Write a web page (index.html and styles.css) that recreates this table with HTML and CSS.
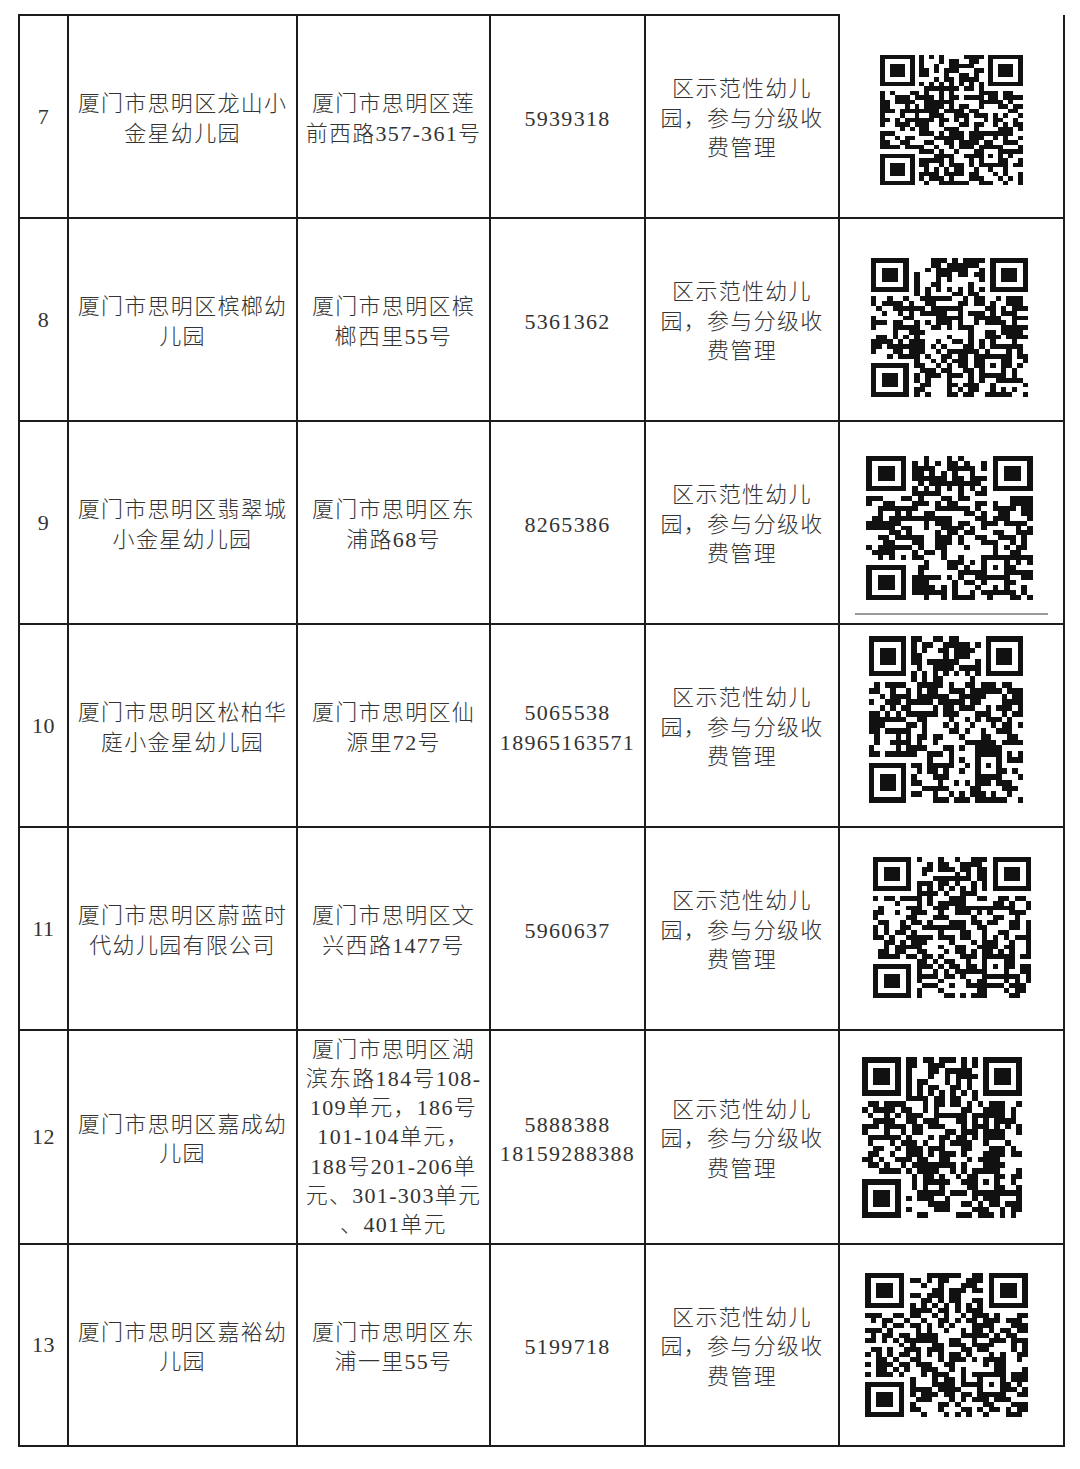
FILE: index.html
```html
<!DOCTYPE html>
<html lang="zh-CN">
<head>
<meta charset="utf-8">
<title>幼儿园名单</title>
<link rel="stylesheet" href="styles.css">
</head>
<body>
<table class="list">
  <colgroup>
    <col class="c-no"><col class="c-name"><col class="c-addr"><col class="c-tel"><col class="c-note"><col class="c-qr">
  </colgroup>
  <tbody>
    <tr class="r-std">
      <td class="no">7</td>
      <td class="txt">厦门市思明区龙山小<br>金星幼儿园</td>
      <td class="txt">厦门市思明区莲<br>前西路357-361号</td>
      <td class="txt">5939318</td>
      <td class="txt">区示范性幼儿<br>园，参与分级收<br>费管理</td>
      <td class="qrcell first"><div class="qrwrap"><svg class="qr qr7" data-seed="7"></svg></div></td>
    </tr>
    <tr class="r-std">
      <td class="no">8</td>
      <td class="txt">厦门市思明区槟榔幼<br>儿园</td>
      <td class="txt">厦门市思明区槟<br>榔西里55号</td>
      <td class="txt">5361362</td>
      <td class="txt">区示范性幼儿<br>园，参与分级收<br>费管理</td>
      <td class="qrcell"><div class="qrwrap"><svg class="qr qr8" data-seed="18"></svg></div></td>
    </tr>
    <tr class="r-std">
      <td class="no">9</td>
      <td class="txt">厦门市思明区翡翠城<br>小金星幼儿园</td>
      <td class="txt">厦门市思明区东<br>浦路68号</td>
      <td class="txt">8265386</td>
      <td class="txt">区示范性幼儿<br>园，参与分级收<br>费管理</td>
      <td class="qrcell"><div class="qrwrap w9"><svg class="qr qr9" data-seed="29"></svg><div class="qr-rule"></div></div></td>
    </tr>
    <tr class="r-std">
      <td class="no">10</td>
      <td class="txt">厦门市思明区松柏华<br>庭小金星幼儿园</td>
      <td class="txt">厦门市思明区仙<br>源里72号</td>
      <td class="txt">5065538<br>18965163571</td>
      <td class="txt">区示范性幼儿<br>园，参与分级收<br>费管理</td>
      <td class="qrcell"><div class="qrwrap"><svg class="qr qr10" data-seed="310"></svg></div></td>
    </tr>
    <tr class="r-std">
      <td class="no">11</td>
      <td class="txt">厦门市思明区蔚蓝时<br>代幼儿园有限公司</td>
      <td class="txt">厦门市思明区文<br>兴西路1477号</td>
      <td class="txt">5960637</td>
      <td class="txt">区示范性幼儿<br>园，参与分级收<br>费管理</td>
      <td class="qrcell"><div class="qrwrap"><svg class="qr qr11" data-seed="411"></svg></div></td>
    </tr>
    <tr class="r-tall">
      <td class="no">12</td>
      <td class="txt">厦门市思明区嘉成幼<br>儿园</td>
      <td class="txt addr-long">厦门市思明区湖<br>滨东路184号108-<br>109单元，186号<br>101-104单元，<br>188号201-206单<br>元、301-303单元<br>、401单元</td>
      <td class="txt">5888388<br>18159288388</td>
      <td class="txt">区示范性幼儿<br>园，参与分级收<br>费管理</td>
      <td class="qrcell"><div class="qrwrap"><svg class="qr qr12" data-seed="512"></svg></div></td>
    </tr>
    <tr class="r-last">
      <td class="no">13</td>
      <td class="txt">厦门市思明区嘉裕幼<br>儿园</td>
      <td class="txt">厦门市思明区东<br>浦一里55号</td>
      <td class="txt">5199718</td>
      <td class="txt">区示范性幼儿<br>园，参与分级收<br>费管理</td>
      <td class="qrcell"><div class="qrwrap"><svg class="qr qr13" data-seed="613"></svg></div></td>
    </tr>
  </tbody>
</table>
<script src="script.js"></script>
</body>
</html>
```
FILE: styles.css
```css
html, body {
  margin: 0;
  padding: 0;
  background: #ffffff;
}
body {
  padding: 14px 0 0 18px;
  font-family: "Liberation Serif", "Noto Sans CJK SC", serif;
  color: #333333;
}
.list {
  border-collapse: collapse;
  table-layout: fixed;
  width: 1047px;
}
.c-no { width: 49px; }
.c-name { width: 229px; }
.c-addr { width: 193px; }
.c-tel { width: 155px; }
.c-note { width: 194px; }
.c-qr { width: 225px; }

.list td {
  border: 2px solid #1c1c1c;
  padding: 0;
  text-align: center;
  vertical-align: middle;
}
.r-std { height: 203px; }
.r-tall { height: 214px; }
.r-last { height: 202px; }

.no {
  font-size: 22px;
  letter-spacing: 0.5px;
  padding-top: 2px;
}
.txt {
  font-size: 22px;
  font-weight: 300;
  letter-spacing: 1.3px;
  line-height: 29.5px;
  padding-left: 1px;
}
.list td.txt {
  padding-top: 4px;
}
.list td.addr-long {
  line-height: 29.2px;
  padding-top: 0;
}
.qrcell.first {
  border-top-style: hidden;
}
.qrwrap {
  display: flex;
  flex-direction: column;
  align-items: center;
}
.qr {
  display: block;
  shape-rendering: crispEdges;
}
.qr7 { width: 143px; height: 130px; margin-top: 7px; }
.qr8 { width: 157px; height: 139px; margin-top: 16px; margin-right: 4px; }
.qr9 { width: 167px; height: 144px; margin-right: 4px; }
.w9 { margin-top: 26px; }
.qr-rule {
  width: 193px;
  height: 2px;
  margin-top: 13px;
  background: #9a9a9a;
}
.qr10 { width: 154px; height: 167px; margin-bottom: 12px; margin-right: 11px; }
.qr11 { width: 158px; height: 141px; margin-bottom: 2px; }
.qr12 { width: 160px; height: 161px; margin-right: 19px; }
.qr13 { width: 163px; height: 144px; margin-right: 10px; }
```
FILE: script.js
```js
(function () {
  var SVGNS = "http://www.w3.org/2000/svg";
  function rng(seed) {
    var s = (seed * 2654435761) >>> 0;
    return function () {
      s = (s * 1664525 + 1013904223) >>> 0;
      return s / 4294967296;
    };
  }
  function build(seed) {
    var N = 29, r = rng(seed), m = [], i, j;
    for (i = 0; i < N; i++) { m.push([]); for (j = 0; j < N; j++) m[i].push(null); }
    function finder(R, C) {
      for (var dr = -1; dr <= 7; dr++) for (var dc = -1; dc <= 7; dc++) {
        var rr = R + dr, cc = C + dc;
        if (rr < 0 || cc < 0 || rr >= N || cc >= N) continue;
        var v;
        if (dr < 0 || dr > 6 || dc < 0 || dc > 6) v = 0;
        else if (dr === 0 || dr === 6 || dc === 0 || dc === 6) v = 1;
        else if (dr >= 2 && dr <= 4 && dc >= 2 && dc <= 4) v = 1;
        else v = 0;
        m[rr][cc] = v;
      }
    }
    finder(0, 0); finder(0, N - 7); finder(N - 7, 0);
    for (i = 8; i < N - 8; i++) { m[6][i] = i % 2 === 0 ? 1 : 0; m[i][6] = i % 2 === 0 ? 1 : 0; }
    for (var dr = -2; dr <= 2; dr++) for (var dc = -2; dc <= 2; dc++) {
      var d = Math.max(Math.abs(dr), Math.abs(dc));
      m[22 + dr][22 + dc] = d === 1 ? 0 : 1;
    }
    var path = "";
    for (i = 0; i < N; i++) for (j = 0; j < N; j++) {
      var v = m[i][j];
      if (v === null) v = r() < 0.54 ? 1 : 0;
      if (v) path += "M" + j + " " + i + "h1v1h-1z";
    }
    return path;
  }
  var list = document.querySelectorAll("svg.qr");
  for (var k = 0; k < list.length; k++) {
    var svg = list[k];
    svg.setAttribute("viewBox", "0 0 29 29");
    svg.setAttribute("preserveAspectRatio", "none");
    var p = document.createElementNS(SVGNS, "path");
    p.setAttribute("d", build(parseInt(svg.getAttribute("data-seed"), 10)));
    p.setAttribute("fill", "#111");
    svg.appendChild(p);
  }
})();
```
